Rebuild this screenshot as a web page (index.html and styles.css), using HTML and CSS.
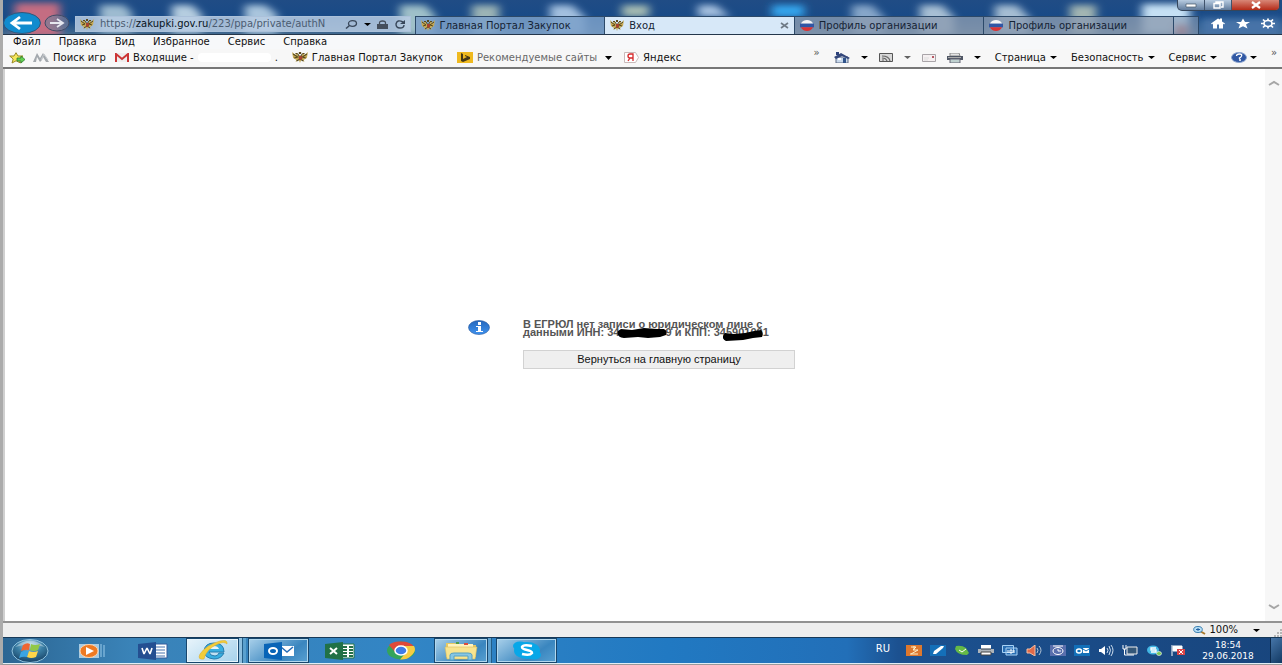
FILE: index.html
```html
<!DOCTYPE html>
<html lang="ru">
<head>
<meta charset="utf-8">
<title>Вход</title>
<link rel="stylesheet" href="styles.css">
</head>
<body>
<svg class="defs" aria-hidden="true">
  <defs>
    <filter id="soft"><feGaussianBlur stdDeviation="5 3"/></filter>
    <radialGradient id="orb" cx=".5" cy=".25" r=".8"><stop offset="0" stop-color="#b9dced"/><stop offset=".45" stop-color="#3b7fa5"/><stop offset="1" stop-color="#123a5e"/></radialGradient>
    <linearGradient id="info" x1="0" y1="0" x2="0" y2="1"><stop offset="0" stop-color="#2467bd"/><stop offset="1" stop-color="#3f92ee"/></linearGradient>
  </defs>
  <symbol id="eagle" viewBox="0 0 14 11" preserveAspectRatio="none">
    <path d="M6 4 4 1 3 3 0 0l1 6 3 2-1 2 3-2 1 3 1-3 3 2-1-2 3-2 1-6-3 3-1-2-2 3Z" fill="#c5a955"/>
    <path d="M1 2l4 3-3 1M13 2 9 5l3 1M5 2l2 3 2-3M4 9l3-2 3 2" fill="none" stroke="#54481f"/>
    <path d="M6 4h3v3L7 8 6 7Z" fill="#a5432f"/><path d="M6 0h2v2H6ZM3 1h2v1H3ZM9 1h2v1H9Z" fill="#5b4a1e"/>
  </symbol>
  <symbol id="flag" viewBox="0 0 16 12" preserveAspectRatio="none">
    <path d="M1 4Q3 0 8 0t7 4Z" fill="#f2f2f5"/><path d="M0 4h16v4H0Z" fill="#3156a5"/><path d="M1 8h14q-2 4-7 4T1 8Z" fill="#d93336"/>
  </symbol>
  <symbol id="caret" viewBox="0 0 8 4" preserveAspectRatio="none"><path d="M0 0h8L4 4Z"/></symbol>
</svg>
<div class="window">
  <header class="titlebar">
    <svg class="desktop" viewBox="0 0 1282 34" preserveAspectRatio="none" aria-hidden="true">
      <g filter="url(#soft)">
        <path d="M15 3h45v34H15Z" fill="#c46d82"/>
        <path d="M100 5h24l8 8v20h-32Z" fill="#9dbbd0"/><path d="M172 5h20l10 10v18h-30Z" fill="#b5cde0"/>
        <path d="M245 5h20l12 9v20h-32Z" fill="#a9c5dd"/><path d="M400 5h25l10 10v20h-35Z" fill="#9fc0c9"/>
        <path d="M472 5h27v30h-27Z" fill="#9bb4b5"/><path d="M550 5h22l13 12v18h-35Z" fill="#a3c0df"/>
        <path d="M622 5h27v12h-27Z" fill="#a5bbb2"/><path d="M698 5h18l14 12h-32Z" fill="#a5c0df"/>
        <path d="M772 5h32v12h-32Z" fill="#36a5ed"/><path d="M852 5h20l12 12v18h-32Z" fill="#86a6c9"/>
        <path d="M920 5h22l12 12v18h-34Z" fill="#a7bfd4"/><path d="M995 5h22l12 12v18h-34Z" fill="#a5bdd3"/>
        <path d="M1070 5h26v30h-26Z" fill="#a2b5b2"/><path d="M1142 4h48v30h-48Z" fill="#c5e0f4"/>
        <path d="M1174 24h14v12h-14Z" fill="#bb7374"/><path d="M1200 18h82v18h-82Z" fill="#4773a8"/>
      </g>
    </svg>
    <div class="caption-buttons">
      <button aria-label="Свернуть"><svg viewBox="0 0 12 8"><path d="M1 3h10v3H1Z" fill="#fff" stroke="#465668" stroke-width=".7"/></svg></button>
      <button aria-label="Развернуть"><svg viewBox="0 0 12 8"><path d="M4 2V1h7v5H9M2 2.500h6v4.500H2Z" fill="none" stroke="#fff" stroke-width="1.400"/></svg></button>
      <button class="close-window" aria-label="Закрыть"><svg viewBox="0 0 12 8"><path d="m2 1 8 6m0-6L2 7" stroke="#fff" stroke-width="2.200"/></svg></button>
    </div>
    <button class="back" aria-label="Назад"><svg viewBox="0 0 38 22"><ellipse cx="19" cy="11" rx="18.500" ry="10.500" fill="#118bce" stroke="#315779"/><path d="M29 11H10m7-6-8 6 8 6" fill="none" stroke="#fff" stroke-width="2.800"/></svg></button>
    <button class="forward" aria-label="Вперёд"><svg viewBox="0 0 26 18"><ellipse cx="13" cy="9" rx="12" ry="8" fill="#777e98" fill-opacity=".65" stroke="#414b66"/><path d="M6 9h12m-5-4 6 4-6 4" fill="none" stroke="#e6e7ef" stroke-width="1.800"/></svg></button>
    <div class="address">
      <svg class="i14"><use href="#eagle"/></svg>
      <div class="url" role="textbox" aria-label="Адрес">https://<b>zakupki.gov.ru</b>/223/ppa/private/authN</div>
      <button aria-label="Поиск"><svg width="14" height="9" viewBox="0 0 14 9"><ellipse cx="8.500" cy="3.500" rx="4" ry="2.800" fill="none" stroke="#38475a" stroke-width="1.300"/><path d="M5.500 5.500 2 8.500" stroke="#38475a" stroke-width="1.500"/></svg></button>
      <button aria-label="Список адресов"><svg width="7" height="3"><use href="#caret"/></svg></button>
      <svg class="lock" viewBox="0 0 11 9"><path d="M0 4h11v5H0Z" fill="#444e5c"/><path d="M2.500 4V3q0-2 3-2t3 2v1" fill="none" stroke="#444e5c" stroke-width="1.300"/></svg>
      <button aria-label="Обновить"><svg width="12" height="9" viewBox="0 0 12 9"><path d="M9 2Q3-1 2 4q0 4 4 4 4 0 4-3" fill="none" stroke="#38475a" stroke-width="1.400"/><path d="M11 0v4H6Z" fill="#38475a"/></svg></button>
    </div>
    <nav class="tabs">
      <a class="tab first" href="#"><svg class="i14"><use href="#eagle"/></svg>Главная Портал Закупок</a>
      <div class="tab active"><svg class="i14"><use href="#eagle"/></svg><span>Вход</span><button aria-label="Закрыть вкладку"><svg width="9" height="7" viewBox="0 0 9 7"><path d="m1 1 7 5m0-5L1 6" stroke="#6f7b87" stroke-width="1.700"/></svg></button></div>
      <a class="tab" href="#"><svg class="i14"><use href="#flag"/></svg>Профиль организации</a>
      <a class="tab" href="#"><svg class="i14"><use href="#flag"/></svg>Профиль организации</a>
      <button class="new-tab" aria-label="Новая вкладка"></button>
    </nav>
    <div class="tools">
      <button aria-label="Домой"><svg viewBox="0 0 14 10"><path d="M0 5 7 0l2 1V0h2v3l3 2-1 1-1-1v5H8V6H6v4H2V5L1 6Z"/></svg></button>
      <button aria-label="Избранное"><svg viewBox="0 0 14 10"><path d="m7 0 2 3.500h5L10 6l1.500 4L7 7.800 2.500 10 4 6 0 3.500h5Z"/></svg></button>
      <button aria-label="Параметры"><svg viewBox="0 0 14 10"><ellipse cx="7" cy="5" rx="4" ry="3" fill="none" stroke="#fff" stroke-width="1.700"/><path d="M7 0v2m0 6v2M0 5h3m8 0h3M2 1l2 2m6 4 2 2m0-8-2 2M4 7 2 9" stroke="#fff" stroke-width="1.700"/></svg></button>
    </div>
  </header>

  <nav class="menu">
    <button>Файл</button><button>Правка</button><button>Вид</button><button>Избранное</button><button>Сервис</button><button>Справка</button>
  </nav>

  <div class="favorites">
    <button class="addfav" aria-label="Добавить в избранное"><svg width="17" height="12" viewBox="0 0 17 12"><path d="m7 .7 2 3.300h5l-4 3 1.500 4L7 8.800 3 11l1.200-4L.700 4H5Z" fill="#f6e65c" stroke="#9b8c25"/><path d="M8 6h4V4l4 3.500-4 3.500V9H8Z" fill="#62cf50" stroke="#2c7d30" stroke-width=".8"/></svg></button>
    <a class="games" href="#"><svg width="16" height="9" viewBox="0 0 16 9"><path d="M0 9 4 0l3 5 3-5 6 9h-3l-3-5-1 3-2 2-3-5-1 5Z" fill="#a4a9ae"/><path d="m8 7 3-6 4 6" fill="none" stroke="#c6cacd"/></svg>Поиск игр</a>
    <a class="mail" href="#"><svg width="14" height="9" viewBox="0 0 14 9"><path d="M0 0h14v9H0Z" fill="#eee"/><path d="M1 9V1l6 5 6-5v8" fill="none" stroke="#cc3535" stroke-width="2"/></svg>Входящие -<span class="erased"></span>.</a>
    <a class="portal" href="#"><svg width="16" height="11"><use href="#eagle"/></svg>Главная Портал Закупок</a>
    <button class="suggested"><svg width="16" height="11" viewBox="0 0 16 11"><path d="M0 0h16v11H0Z" fill="#efb91f"/><path d="m4 1 2 1v5l4-2-2-1V3l5 2v2L6 10 4 9Z" fill="#443817"/></svg>Рекомендуемые сайты<svg class="caret" width="7" height="4"><use href="#caret"/></svg></button>
    <a class="yandex" href="#"><svg width="15" height="11" viewBox="0 0 15 11"><path d="M.5.500h11l3 5-3 5H.5Z" fill="#fff" stroke="#c8b9b9"/><path d="M9 9V2H6q-2 0-2 2t2 2h3M6 6 4 9" fill="none" stroke="#d62729" stroke-width="1.300"/></svg>Яндекс</a>
    <button class="more" aria-label="Ещё">»</button>
    <div class="commands">
      <div class="command-icons">
        <button aria-label="Домашняя страница"><svg width="16" height="11" viewBox="0 0 16 11"><path d="M2 5h12v6H2Z" fill="#c9d9ec" stroke="#596782"/><path d="M0 5 7 1l9 5-2 1-6-3-6 3Z" fill="#34477b"/><path d="M2 0h3v3H2Z" fill="#2d427b"/><path d="M9 6h3v5H9Z" fill="#31548b"/><path d="M4 6h3v2H4Z" fill="#fff"/></svg></button>
        <button aria-label="Меню домашней страницы"><svg width="7" height="3"><use href="#caret"/></svg></button>
        <button aria-label="RSS"><svg width="14" height="9" viewBox="0 0 14 9"><path d="M.5.500h13v8H.5Z" fill="#d8d8d8" stroke="#555"/><path d="M3 3q7 0 8 5M3 5q4 0 5 3M3 7h2" fill="none" stroke="#666" stroke-width="1.200"/></svg></button>
        <button class="muted" aria-label="Меню RSS"><svg width="7" height="3"><use href="#caret"/></svg></button>
        <button aria-label="Почта"><svg width="14" height="8" viewBox="0 0 14 8"><path d="M.5.500h13v7H.5Z" fill="#f5f0f1" stroke="#a9a4a8"/><path d="M2 4h5M2 6h4" stroke="#ddd"/><path d="M10 2h2v2h-2Z" fill="#b65864"/></svg></button>
        <button aria-label="Печать"><svg width="16" height="10" viewBox="0 0 16 10"><path d="M3 0h9l1 3H3Z" fill="#e5e5e5" stroke="#888"/><path d="M0 3h16v4H0Z" fill="#505765"/><path d="M1 4h13v1H1Z" fill="#aaa"/><path d="M3 6h10v4H3Z" fill="#bfd1cf" stroke="#667"/></svg></button>
        <button aria-label="Меню печати"><svg width="7" height="3"><use href="#caret"/></svg></button>
      </div>
      <button>Страница<svg class="caret" width="7" height="3"><use href="#caret"/></svg></button>
      <button>Безопасность<svg class="caret" width="7" height="3"><use href="#caret"/></svg></button>
      <button>Сервис<svg class="caret" width="7" height="3"><use href="#caret"/></svg></button>
      <button class="help" aria-label="Справка"><svg width="16" height="11" viewBox="0 0 16 11"><ellipse cx="8" cy="5.500" rx="7.500" ry="5" fill="#3158a4" stroke="#8ea6cf"/><path d="M5.500 4q0-2 3-2t2 2-2 2v1M8 8h2" fill="none" stroke="#fff" stroke-width="1.300"/></svg><svg width="7" height="3"><use href="#caret"/></svg></button>
    </div>
    <button class="more last" aria-label="Ещё команды">»</button>
  </div>

  <main class="viewport">
    <section class="message">
      <svg class="info" viewBox="0 0 22 15"><ellipse cx="11" cy="7.500" rx="10.500" ry="7" fill="url(#info)" stroke="#27579e" stroke-width=".6"/><path d="M8 6h5v5h2v1H8v-1h2V7H8ZM10 2h3v3h-3Z" fill="#fff"/></svg>
      <div class="message-body">
        <p>В ЕГРЮЛ нет записи о юридическом лице с<br>данными ИНН: 34<span class="redacted inn"><svg viewBox="0 0 50 10" preserveAspectRatio="none"><path d="M4 1 15 2 27 0l13 1h7q4 2 2 6l-6 2-12 1-10-1-14 1Q-1 9 1 3Z"/></svg></span>9 и КПП: 34<span class="redacted kpp">590100<svg viewBox="0 0 40 11" preserveAspectRatio="none"><path d="m2 3 9 1 11-1 9-2 7-1q3 3 1 7l-9 1-10 2-17 1q-4-2-3-5Z"/></svg></span>1</p>
        <button class="return">Вернуться на главную страницу</button>
      </div>
    </section>
    <div class="scrollbar">
      <button aria-label="Прокрутить вверх"><svg viewBox="0 0 12 6"><path d="m1 5 5-3 5 3" /></svg></button>
      <button aria-label="Прокрутить вниз"><svg viewBox="0 0 12 6"><path d="m1 1 5 3 5-3"/></svg></button>
    </div>
  </main>

  <footer class="status">
    <button><svg width="13" height="9" viewBox="0 0 13 9"><path d="m7 5 5 3" stroke="#a7782a" stroke-width="2"/><ellipse cx="5" cy="3.500" rx="4.300" ry="3" fill="#b8dff5" stroke="#397eaf"/><path d="M3 3.500h4M5 2v3" stroke="#2360a2"/></svg>100%<svg class="zoom-caret" width="7" height="3"><use href="#caret"/></svg></button>
    <svg class="grip" viewBox="0 0 8 8"><path d="M6 0h2v2H6ZM3 3h2v2H3ZM6 3h2v2H6ZM0 6h2v2H0ZM3 6h2v2H3ZM6 6h2v2H6Z" fill="#b5b5b5"/></svg>
  </footer>

  <footer class="taskbar">
    <div class="apps">
      <button class="start" aria-label="Пуск"><svg viewBox="0 0 38 24"><ellipse cx="19" cy="12" rx="18" ry="11.500" fill="url(#orb)" stroke="#90c3df"/><path d="M4 8Q19-5 34 8 19 3 4 8Z" fill="#fff" opacity=".35"/><path d="M12 6q4-3 7-1l-1 6q-4-1-8 1Z" fill="#ef6532"/><path d="M20 5q4 2 9 0l-2 6q-4 2-8 0Z" fill="#91c846"/><path d="M10 13q4-2 8-1l-2 6q-4-1-8 1Z" fill="#3ba4e3"/><path d="M18 12q4 2 9 0l-2 6q-5 2-9 0Z" fill="#ffd54a"/></svg></button>
      <button class="app media" aria-label="Проигрыватель"><svg width="26" height="16" viewBox="0 0 26 16"><path d="M0 1h20v14H0Z" fill="#a7cbe2"/><path d="M22 1v13m3-12v12" stroke="#9ccdec"/><ellipse cx="10" cy="8" rx="9" ry="6.500" fill="#ee7a23" stroke="#ffd1a6"/><path d="m7 4 8 4-8 4Z" fill="#fff"/></svg></button>
      <button class="app word" aria-label="Word"><svg width="30" height="18" viewBox="0 0 30 18"><path d="M16 2h13v14H16Z" fill="#fff" stroke="#315a9c"/><path d="M18 5h9m-9 3h9m-9 3h9m-9 3h9" stroke="#4773ad"/><path d="m0 2 18-2v18L0 16Z" fill="#244f91"/><path d="m4 6 2 6 3-6 3 6 2-6" fill="none" stroke="#fff" stroke-width="1.600" stroke-linejoin="bevel"/></svg></button>
      <button class="app ie framed selected" aria-label="Internet Explorer"><svg width="32" height="21" viewBox="0 0 32 21"><path d="M27 13q-3 6-10 6-10-1-10-8 1-8 10-8 10 0 10 9H12q1 4 6 4 3 0 4-3Z" fill="#39afe1" stroke="#247cae"/><path d="M12 9q1-3 5-3t5 3Z" fill="#e6f5fb"/><path d="M7 19q-7 1-4-5Q9 5 23 1q8-2 7 3-3-3-9 0Q9 9 7 19Z" fill="#f3cd39" stroke="#dba82c" stroke-width=".5"/></svg></button>
      <button class="app outlook framed" aria-label="Outlook"><svg width="30" height="18" viewBox="0 0 30 18"><path d="M16 4h14v10H16Z" fill="#fff"/><path d="m17 5 6 5 6-5" fill="none" stroke="#286db6" stroke-width="1.500"/><path d="m0 2 18-2v18L0 16Z" fill="#0864b7"/><ellipse cx="9" cy="9" rx="4" ry="3" fill="none" stroke="#fff" stroke-width="2"/></svg></button>
      <button class="app excel" aria-label="Excel"><svg width="30" height="18" viewBox="0 0 30 18"><path d="M16 2h13v14H16Z" fill="#fff" stroke="#26764c"/><path d="M18 5h4m2 0h4M18 8h4m2 0h4m-10 3h4m2 0h4m-10 3h4m2 0h4" stroke="#247046" stroke-width="2"/><path d="m0 2 18-2v18L0 16Z" fill="#217147"/><path d="m5 6 7 6m0-6-7 6" stroke="#fff" stroke-width="2"/></svg></button>
      <button class="app chrome" aria-label="Chrome"><svg width="30" height="19" viewBox="0 0 30 19"><ellipse cx="15" cy="9.500" rx="14" ry="9" fill="#34a45b"/><path d="M3 4Q7 0 15 .500 25 .500 28 6H15l-6 5Z" fill="#df4939"/><path d="M15 5h13q3 5-3 10-4 4-11 3.500l6-7Z" fill="#f6cc42"/><ellipse cx="15" cy="9.500" rx="6" ry="4.500" fill="#407ce8" stroke="#fff" stroke-width="1.500"/></svg></button>
      <button class="app explorer framed" aria-label="Проводник"><svg width="34" height="20" viewBox="0 0 34 20"><path d="M2 2h9l3 2h18v12H2Z" fill="#e5c862"/><path d="M4 3h25v5H4Z" fill="#fff3be"/><path d="M1 6h32l-2 12H3Z" fill="#f8e48f" stroke="#d9bc60" stroke-width=".6"/><path d="M12 1h3v2h-3Z" fill="#4d9c48"/><path d="M20 2h4v2h-4Z" fill="#db4c3d"/><path d="M6 19v-5q0-2 4-2h14q4 0 4 2v5h-4v-4H10v4Z" fill="#87c6e3" stroke="#55a0c2"/></svg></button>
      <button class="app skype framed" aria-label="Skype"><svg width="30" height="19" viewBox="0 0 30 19"><ellipse cx="15" cy="9.500" rx="13" ry="8.500" fill="#08a7e8"/><ellipse cx="8" cy="5" rx="7" ry="4.500" fill="#08a7e8"/><ellipse cx="22" cy="14" rx="7" ry="4.500" fill="#08a7e8"/><path d="M20 5q-9-2-10 1 0 2 5 3t5 3q-2 3-10 1" fill="none" stroke="#fff" stroke-width="2.500"/></svg></button>
    </div>
    <div class="tray">
      <span class="language">RU</span>
      <svg viewBox="0 0 16 11"><path d="M0 0h16v11H0Z" fill="#df782d"/><path d="M5 2h5L7 5h5L5 9m-1 0h8M8 1v4" fill="none" stroke="#fff0c9"/></svg>
      <svg viewBox="0 0 16 11"><path d="M0 0h16v11H0Z" fill="#146fb8"/><path d="m3 9 1-3 7-5h3l-1 2-7 6Z" fill="#fff"/></svg>
      <svg viewBox="0 0 16 11"><path d="M2 1q6-1 10 2l3 5-2 2Q3 10 1 4Z" fill="#65b947"/><path d="m5 5 3 2 4-3" fill="none" stroke="#fff"/></svg>
      <svg viewBox="0 0 16 11"><path d="M3 0h10v4H3Z" fill="#fff"/><path d="M0 4h16v4H0Z" fill="#aeb5bb"/><path d="M3 7h10v3H3Z" fill="#fff" stroke="#444"/><path d="M3 4h10" stroke="#263544"/></svg>
      <svg viewBox="0 0 16 11"><path d="M.5.500h11v7H.5ZM4 3h11v7H4Z" fill="#286db2" stroke="#a8d2f5"/><path d="M6 5v3m2-3h2v3H8Zm4 0v3" fill="none" stroke="#fff"/></svg>
      <svg viewBox="0 0 16 11"><path d="M1 4h3l5-4v11L4 8H1Z" fill="#e16a49" stroke="#f7c0a4"/><path d="M11 3q2 2 0 5m2-7q4 4 0 9" fill="none" stroke="#b5c5d5"/></svg>
      <svg viewBox="0 0 16 11"><path d="M0 0h16v11H0Z" fill="#596fad"/><ellipse cx="8" cy="6" rx="5" ry="3.500" fill="none" stroke="#fff"/><path d="M3 1h10M8 4v2h3" fill="none" stroke="#fff"/></svg>
      <svg viewBox="0 0 16 11"><path d="M0 0h16v11H0Z" fill="#1270b9"/><ellipse cx="5" cy="6" rx="2.500" ry="2" fill="none" stroke="#fff" stroke-width="1.500"/><path d="M9 3h6v5H9Z" fill="#fff"/><path d="m9 4 3 2 3-2" fill="none" stroke="#1270b9"/></svg>
      <svg viewBox="0 0 16 11"><path d="M1 4h2l4-3v9L3 7H1Z" fill="#fff"/><path d="M9 3q2 2 0 5m2-7q3 4 0 9m2-10q4 5 0 11" fill="none" stroke="#cddded"/></svg>
      <svg viewBox="0 0 16 11"><path d="M5 2h10v7H5Z" fill="#345778" stroke="#eee"/><path d="M1 0v4h3V0M2.500 4v6H12" fill="none" stroke="#fff"/></svg>
      <svg viewBox="0 0 16 11"><ellipse cx="7" cy="5" rx="6" ry="4.500" fill="#43b7e5"/><path d="M10 3H5v2h5v2H5" fill="none" stroke="#fff" stroke-width="1.300"/><ellipse cx="13" cy="8.500" rx="2.500" ry="2" fill="#77c658" stroke="#fff" stroke-width=".6"/></svg>
      <svg viewBox="0 0 16 11"><path d="M2 0v11M3 1h9v5H3Z" fill="#fff" stroke="#fff"/><path d="M7 4h8v6H7Z" fill="#db4648"/><path d="m9 5 4 4m0-4L9 9" stroke="#fff"/></svg>
      <time class="clock"><span>18:54</span><span>29.06.2018</span></time>
      <button class="show-desktop" aria-label="Показать рабочий стол"></button>
    </div>
  </footer>
</div>
</body>
</html>
```
FILE: styles.css
```css
* { box-sizing: border-box; }
body {
  margin: 0;
  background: #fff;
  color: #111;
  font: 10px/12px "DejaVu Sans", sans-serif;
}
button {
  display: flex;
  align-items: center;
  justify-content: center;
  padding: 0;
  border: 0;
  background: none;
  color: inherit;
  font: inherit;
  white-space: nowrap;
}
a { color: inherit; text-decoration: none; white-space: nowrap; }
svg { display: block; flex-shrink: 0; }
.defs { position: absolute; width: 0; height: 0; }
.i14 { width: 14px; height: 11px; }
.caret { margin-left: 4px; }
.window {
  display: flex;
  flex-direction: column;
  height: 100vh;
  border-left: 3px solid #ababab;
  border-bottom: 1px solid #999;
}

.titlebar {
  position: relative;
  display: flex;
  align-items: flex-end;
  height: 35px;
  border-bottom: 1px solid #24364b;
  background: linear-gradient(#204c85, #174a87 60%, #42698f);
}
.desktop { position: absolute; top: 0; left: -3px; width: calc(100% + 3px); height: 100%; }
.titlebar > :not(.desktop) { z-index: 1; }
.caption-buttons {
  position: absolute;
  top: 0;
  right: 2px;
  display: flex;
  height: 11px;
  border: 1px solid #35465b;
  border-top: 0;
  border-radius: 0 0 5px 5px;
  overflow: hidden;
  background: linear-gradient(#b7cbe0, #607b9c);
}
.caption-buttons button { width: 27px; border-right: 1px solid #40536b; }
.caption-buttons .close-window { width: 47px; border: 0; background: linear-gradient(#d88777, #b52b18); }
.caption-buttons svg { width: 12px; height: 8px; }
.back svg { width: 38px; height: 22px; }
.forward { margin: 0 5px 2px 3px; }
.forward svg { width: 26px; height: 18px; }
.address {
  display: flex;
  flex: 325 1 0;
  align-items: center;
  gap: 6px;
  min-width: 0;
  height: 16px;
  margin: 0 4px 2px 0;
  padding: 0 4px;
  border: 1px solid #abc1da;
  background: #b9cde3d9;
}
.url { flex: 1; min-width: 0; overflow: hidden; color: #4b5c71; white-space: nowrap; }
.url b { color: #071320; font-weight: 400; }
.lock { width: 11px; height: 9px; }
.tabs { display: flex; flex: 783 1 0; min-width: 0; height: 18px; }
.tab {
  display: flex;
  flex: 1;
  align-items: center;
  gap: 5px;
  min-width: 0;
  padding: 0 5px;
  overflow: hidden;
  border: 1px solid #2c4969;
  border-width: 1px 0 0 1px;
  background: #8b9bb0cc;
  color: #152334;
}
.tab.first { background: #7ba0c9d9; }
.tab.active { background: #d7e8f8; }
.tab.active span { flex: 1; }
.new-tab { width: 26px; border: 1px solid #2c4969; border-bottom: 0; background: #8194ad99; }
.tools { display: flex; gap: 11px; padding: 0 7px 5px 12px; }
.tools svg { width: 14px; height: 11px; fill: #fff; }

.menu { display: flex; gap: 18px; height: 14px; padding: 0 10px; background: #f7f8fa; }
.favorites {
  display: flex;
  align-items: center;
  height: 20px;
  padding: 0 5px 1px 6px;
  border-bottom: 2px solid #777;
  background: #f7f7f7;
}
.favorites > a, .suggested { display: flex; align-items: center; gap: 4px; }
.games { margin-left: 7px; }
.favorites .mail { margin-left: 9px; }
.erased { width: 73px; height: 9px; border-radius: 4px; background: #fff; }
.portal { margin-left: 14px; }
.suggested { margin-left: 14px; color: #686868; }
.favorites .yandex { margin-left: 12px; }
.more { align-self: flex-start; margin: -2px 14px 0 auto; color: #555; }
.more.last { margin: -2px 0 0 14px; }
.commands { display: flex; align-items: center; gap: 14px; }
.command-icons { display: flex; align-items: center; gap: 11px; }
.commands .muted { opacity: .6; }
.help { gap: 3px; }

.viewport { display: flex; flex: 1; min-height: 0; border-left: 2px solid #d0d0d0; background: #fff; }
.message { display: flex; flex: 1; align-items: flex-start; align-self: center; justify-content: center; gap: 33px; padding: 0 7px 2px 0; }
.info { width: 22px; height: 15px; }
.message-body { width: 272px; }
.message p { margin: 0 0 14px; color: #555; font: bold 11px/8px "Liberation Sans", Arial, sans-serif; white-space: nowrap; }
.redacted { position: relative; display: inline-block; }
.redacted svg { position: absolute; fill: #000; }
.inn { width: 46px; height: 8px; vertical-align: top; }
.inn svg { top: 0; left: -3px; width: 50px; height: 10px; }
.kpp svg { top: 2px; left: -3px; width: 40px; height: 11px; }
.return { width: 100%; height: 19px; border: 1px solid #d2d2d2; background: #efefef; font: 11px/12px "Liberation Sans", Arial, sans-serif; }
.scrollbar { display: flex; flex-direction: column; justify-content: space-between; width: 17px; padding: 8px 0; background: #f7f7f7; }
.scrollbar button { height: 12px; }
.scrollbar svg { width: 12px; height: 6px; fill: none; stroke: #a6a6a6; stroke-width: 2; }

.status {
  display: flex;
  align-items: center;
  justify-content: flex-end;
  gap: 14px;
  height: 16px;
  border-top: 2px solid #929292;
  background: #eee;
}
.status button { gap: 3px; }
.zoom-caret { margin-left: 12px; }
.grip { align-self: flex-end; width: 8px; height: 8px; }

.taskbar {
  display: flex;
  justify-content: space-between;
  height: 27px;
  border-top: 1px solid #173958;
  border-bottom: 1px solid #e1edf5;
  background: linear-gradient(90deg, #2c6693, #3a83b8 10%, #3285c5 32%, #2179c2 52%, #226fb8 66%, #1c5190 70%, #18457d);
}
.apps { display: flex; align-items: center; }
.start { margin-left: 8px; }
.start svg { width: 38px; height: 24px; }
.app { width: 61px; height: 25px; }
.media { margin-left: 12px; }
.framed { border: 1px solid #17466d; box-shadow: inset 0 0 0 1px #b2d8ee; background: linear-gradient(145deg, #a9d0ea, #3a86bf 65%, #58a0d1); }
.selected { width: 53px; margin: 0 9px 0 3px; background: linear-gradient(145deg, #e8f4fb, #a5d2ec); box-shadow: inset 0 0 0 1px #e8f5fc, 3px 0 #8fc0df, 4px 0 #235d86, 7px 0 #5ba1ce; }
.explorer { width: 54px; margin: 0 8px 0 3px; box-shadow: inset 0 0 0 1px #b2d8ee, 3px 0 #5b9fce, 4px 0 #235d86; }
.tray { display: flex; align-items: center; gap: 8px; color: #fff; }
.tray > svg { width: 16px; height: 11px; }
.language { margin: -4px 8px 0 0; }
.clock { display: flex; flex-direction: column; width: 68px; text-align: center; font-size: 9px; line-height: 11px; }
.show-desktop { width: 12px; height: 25px; border-left: 1px solid #0b294c; background: linear-gradient(135deg, #4676a9, #123963); }
```
